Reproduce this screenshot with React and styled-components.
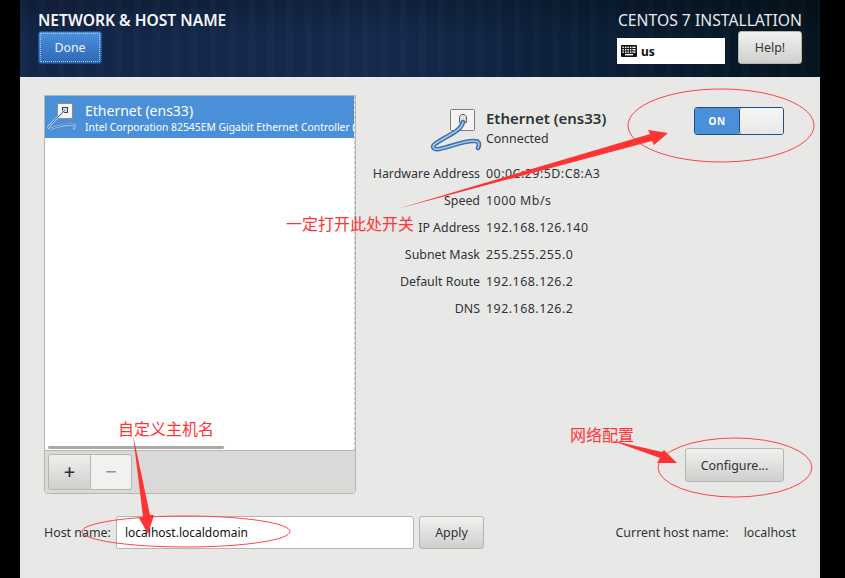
import React from "react"
import styled, { createGlobalStyle } from "styled-components"

const GlobalStyle = createGlobalStyle`
  html, body {
    margin: 0;
    padding: 0;
    background: #000;
  }
  body {
    font-family: "Noto Sans", "Open Sans", sans-serif;
    font-size: 12.4px;
    color: #2e3436;
  }
`

const Screen = styled.div`
  position: relative;
  width: 845px;
  height: 578px;
  overflow: hidden;
  background: #000;
`

const Spoke = styled.div`
  width: 800px;
  height: 578px;
  margin-left: 20px;
  background: #e8e8e7;
  display: flex;
  flex-direction: column;
`

const Header = styled.header`
  height: 77px;
  flex: none;
  display: flex;
  justify-content: space-between;
  padding: 11px 18px 0;
  box-sizing: border-box;
  background:
    repeating-linear-gradient(90deg, rgba(255, 255, 255, 0.012) 0 7px, rgba(0, 0, 0, 0.03) 7px 19px),
    linear-gradient(rgba(0, 0, 0, 0.22), rgba(0, 0, 0, 0) 50%),
    linear-gradient(90deg, #13274a 0%, #152b4f 45%, #0b2039 72%, #06151f 100%);
`

const HeaderLeft = styled.div`
  display: flex;
  flex-direction: column;
  align-items: flex-start;
`

const Title = styled.h1`
  margin: 0 0 1px;
  font-size: 15.6px;
  line-height: 19px;
  font-weight: 600;
  color: #f4f6f8;
  white-space: nowrap;
`

const DoneButton = styled.button`
  width: 64px;
  height: 33px;
  padding: 0;
  font: inherit;
  color: #eef3f9;
  border: 1px solid #1c4f86;
  border-radius: 3px;
  background: linear-gradient(#4c8fdc, #2e69b4);
  outline: 1px dotted #a9c8ec;
  outline-offset: -3px;
`

const HeaderRight = styled.div`
  width: 185px;
  display: flex;
  flex-direction: column;
  align-items: flex-end;
`

const Product = styled.div`
  font-size: 15.7px;
  line-height: 19px;
  color: #e6ebef;
  white-space: nowrap;
`

const HeaderControls = styled.div`
  width: 100%;
  display: flex;
  justify-content: space-between;
  align-items: flex-end;
  margin-top: 1px;
`

const Layout = styled.div`
  width: 108px;
  height: 26px;
  display: flex;
  align-items: center;
  gap: 4px;
  padding-left: 4px;
  box-sizing: border-box;
  background: #fff;
  color: #111;
  font-size: 12px;
  font-weight: 700;
`

const Button = styled.button`
  display: block;
  flex: none;
  width: ${({ $w }) => $w}px;
  height: ${({ $h }) => $h || 34}px;
  padding: 0;
  font: inherit;
  color: #2e3436;
  border: 1px solid #b4b4b1;
  border-radius: 3px;
  background: linear-gradient(#f1f1f0, #cfcfcd);
`

const ApplyButton = styled(Button)`
  margin-left: 5px;
`

const Body = styled.main`
  flex: 1;
  display: grid;
  grid-template-columns: 312px 1fr;
  grid-template-rows: 399px auto;
  row-gap: 22px;
  padding: 18px 24px 0;
`

const DeviceList = styled.section`
  display: flex;
  flex-direction: column;
  border: 1px solid #b6b6b3;
  border-radius: 0 0 4px 4px;
  box-sizing: border-box;
  background: #fff;
  overflow: hidden;
`

const DeviceRows = styled.div`
  position: relative;
  flex: 1;
  overflow: hidden;
  border-right: 1px dashed #c4c4c4;
`

const DeviceRow = styled.div`
  height: 42px;
  display: flex;
  align-items: center;
  gap: 2px;
  padding-left: 2px;
  box-sizing: border-box;
  background: #4a90d9;
  color: #fff;
`

const DeviceText = styled.div`
  display: flex;
  flex-direction: column;
  white-space: nowrap;
`

const DeviceName = styled.span`
  font-size: 14px;
  line-height: 19px;
`

const DeviceModel = styled.span`
  font-size: 10.35px;
  line-height: 14px;
`

const Scrollbar = styled.div`
  position: absolute;
  left: 3px;
  bottom: 1px;
  width: 176px;
  height: 3px;
  border-radius: 2px;
  background: #a9a9a7;
`

const ListToolbar = styled.div`
  height: 43px;
  flex: none;
  display: flex;
  align-items: center;
  padding-left: 3px;
  box-sizing: border-box;
  border-top: 1px solid #b6b6b3;
  background: #d9d9d7;
`

const ToolButton = styled.button`
  width: ${({ $w }) => $w}px;
  height: 36px;
  padding: 0;
  font: inherit;
  font-size: 20px;
  line-height: 1;
  font-weight: ${({ $off }) => ($off ? 400 : 500)};
  color: ${({ $off }) => ($off ? "#8f9394" : "#2e3436")};
  border: 1px solid #b6b6b3;
  border-left-width: ${({ $off }) => ($off ? 0 : 1)}px;
  border-radius: ${({ $off }) => ($off ? "0 3px 3px 0" : "3px 0 0 3px")};
  background: ${({ $off }) => ($off ? "#f1f1f0" : "linear-gradient(#efefee, #cfcfcd)")};
`

const Details = styled.section`
  display: flex;
  flex-direction: column;
  padding: 12px 12px 0 0;
`

const DetailHead = styled.div`
  height: 53px;
  display: flex;
  justify-content: space-between;
  align-items: flex-start;
  padding-left: 74px;
`

const HeadInfo = styled.div`
  display: flex;
  gap: 4px;
`

const HeadText = styled.div`
  display: flex;
  flex-direction: column;
  gap: 2px;
  padding-top: 1px;
`

const HeadName = styled.strong`
  font-size: 15px;
  line-height: 20px;
  font-weight: 600;
`

const HeadState = styled.span`
  line-height: 18px;
`

const Toggle = styled.div`
  width: 90px;
  height: 28px;
  display: flex;
  box-sizing: border-box;
  border: 1px solid #1f4f85;
  border-radius: 3px;
  overflow: hidden;
`

const ToggleOn = styled.div`
  width: 44px;
  display: flex;
  align-items: center;
  justify-content: center;
  background: #4a90d9;
  color: #fff;
  font-size: 10px;
  font-weight: 700;
  letter-spacing: 0.5px;
`

const ToggleKnob = styled.div`
  flex: 1;
  border-left: 1px solid #1f4f85;
  border-radius: 3px 0 0 3px;
  background: linear-gradient(#f6f6f5, #e8e8e6);
`

const DetailGrid = styled.dl`
  margin: 0;
  display: grid;
  grid-template-columns: 124px 1fr;
  grid-auto-rows: 27px;
  column-gap: 6px;
  align-items: center;
`

const DetailLabel = styled.dt`
  text-align: right;
  white-space: nowrap;
`

const DetailValue = styled.dd`
  margin: 0;
  letter-spacing: 0.5px;
`

const ConfigureRow = styled.div`
  margin-top: auto;
  padding-bottom: 12px;
  display: flex;
  justify-content: flex-end;
`

const HostBar = styled.footer`
  grid-column: 1 / -1;
  display: flex;
  align-items: center;
  height: 33px;
`

const HostLabel = styled.label`
  width: 72px;
  flex: none;
  white-space: nowrap;
`

const HostInput = styled.input`
  width: 298px;
  height: 33px;
  flex: none;
  padding: 0 8px;
  box-sizing: border-box;
  font: inherit;
  font-size: 12px;
  color: #111;
  border: 1px solid #b6b6b3;
  border-radius: 3px;
  background: #fff;
`

const CurrentHost = styled.div`
  margin-left: auto;
  display: flex;
  gap: 15px;
`

const Annotations = styled.svg`
  position: absolute;
  inset: 0;
  pointer-events: none;
`

const Note = styled.span`
  position: absolute;
  left: ${({ $x }) => $x}px;
  top: ${({ $y }) => $y}px;
  font-family: "Noto Sans CJK SC", sans-serif;
  font-size: 16px;
  line-height: 20px;
  color: #ff3333;
  white-space: nowrap;
`

const cablePath = "M33 15C31 25 15 29 5 37c-4 3-1 6 4 5 12-2 25-9 36-8 4 0 5 3 3 7"

const EthernetIcon = () => (
  <svg width="52" height="48" viewBox="0 0 52 48" fill="none">
    <rect x="20.5" y="2.5" width="24" height="21" rx="1" fill="#f4f4f3" stroke="#7b7d7e" />
    <path d="M29.5 9.5l2-2h3l2 2v6h-7z" fill="#dedede" stroke="#5e6062" />
    <path d={cablePath} stroke="#3f70ad" strokeWidth="4.6" strokeLinecap="round" />
    <path d={cablePath} stroke="#a8c9ec" strokeWidth="1.6" strokeLinecap="round" />
  </svg>
)

const smallCablePath = "M18 8L2 24c-2 2 1 3 4 2 7-2 15-5 21-3 2 1 1 3-1 4"

const SmallEthernetIcon = () => (
  <svg width="36" height="30" viewBox="0 0 36 30" fill="none" style={{ flex: "none" }}>
    <rect x="10.5" y="1.5" width="15" height="15" fill="#f5f5f4" stroke="#8a8c8d" />
    <rect x="15.5" y="5.5" width="5" height="5" fill="#d8d8d8" stroke="#444" />
    <path d={smallCablePath} stroke="#cfe0f3" strokeWidth="2" />
    <path d={smallCablePath} stroke="#2f5f9d" strokeWidth="0.9" />
  </svg>
)

const KeyboardIcon = () => (
  <svg width="16" height="12" viewBox="0 0 16 12">
    <rect width="16" height="12" rx="1" fill="#111" />
    {[1.6, 4, 6.4].map(y =>
      [1.4, 3.9, 6.4, 8.9, 11.4, 13].map(x => <rect key={`${x}-${y}`} x={x} y={y} width="1.5" height="1.4" fill="#fff" />)
    )}
    <rect x="4" y="8.9" width="8" height="1.5" fill="#fff" />
  </svg>
)

const details = [
  ["Hardware Address", "00:0C:29:5D:C8:A3"],
  ["Speed", "1000 Mb/s"],
  ["IP Address", "192.168.126.140"],
  ["Subnet Mask", "255.255.255.0"],
  ["Default Route", "192.168.126.2"],
  ["DNS", "192.168.126.2"],
]

const App = () => (
  <Screen>
    <GlobalStyle />
    <Spoke>
      <Header>
        <HeaderLeft>
          <Title>NETWORK &amp; HOST NAME</Title>
          <DoneButton>Done</DoneButton>
        </HeaderLeft>
        <HeaderRight>
          <Product>CENTOS 7 INSTALLATION</Product>
          <HeaderControls>
            <Layout>
              <KeyboardIcon />
              us
            </Layout>
            <Button $w={64} $h={33}>Help!</Button>
          </HeaderControls>
        </HeaderRight>
      </Header>
      <Body>
        <DeviceList>
          <DeviceRows>
            <DeviceRow>
              <SmallEthernetIcon />
              <DeviceText>
                <DeviceName>Ethernet (ens33)</DeviceName>
                <DeviceModel>Intel Corporation 82545EM Gigabit Ethernet Controller (</DeviceModel>
              </DeviceText>
            </DeviceRow>
            <Scrollbar />
          </DeviceRows>
          <ListToolbar>
            <ToolButton $w={43}>+</ToolButton>
            <ToolButton $w={41} $off>−</ToolButton>
          </ListToolbar>
        </DeviceList>
        <Details>
          <DetailHead>
            <HeadInfo>
              <EthernetIcon />
              <HeadText>
                <HeadName>Ethernet (ens33)</HeadName>
                <HeadState>Connected</HeadState>
              </HeadText>
            </HeadInfo>
            <Toggle>
              <ToggleOn>ON</ToggleOn>
              <ToggleKnob />
            </Toggle>
          </DetailHead>
          <DetailGrid>
            {details.map(([label, value]) => (
              <React.Fragment key={label}>
                <DetailLabel>{label}</DetailLabel>
                <DetailValue>{value}</DetailValue>
              </React.Fragment>
            ))}
          </DetailGrid>
          <ConfigureRow>
            <Button $w={99}>Configure...</Button>
          </ConfigureRow>
        </Details>
        <HostBar>
          <HostLabel>Host name:</HostLabel>
          <HostInput defaultValue="localhost.localdomain" />
          <ApplyButton $w={65} $h={33}>Apply</ApplyButton>
          <CurrentHost>
            <span>Current host name:</span>
            <span>localhost</span>
          </CurrentHost>
        </HostBar>
      </Body>
    </Spoke>
    <Annotations width="845" height="578" viewBox="0 0 845 578" fill="none">
      <ellipse cx="721" cy="125.5" rx="93" ry="36.5" stroke="#f44" />
      <ellipse cx="186" cy="531.5" rx="104" ry="15.5" stroke="#f44" />
      <ellipse cx="735" cy="467.5" rx="77" ry="29.5" stroke="#f44" />
      <path d="M397 209L650 134 648 130 668 133 654 145 652 141Z" fill="#ff3333" />
      <path d="M133 435L143 517 139 518 148 534 154 515 150 515Z" fill="#ff3333" />
      <path d="M610 440L662 452 664 450 677 463 657 463 660 458Z" fill="#ff3333" />
    </Annotations>
    <Note $x={286} $y={213}>一定打开此处开关</Note>
    <Note $x={118} $y={418}>自定义主机名</Note>
    <Note $x={570} $y={424}>网络配置</Note>
  </Screen>
)

export default App
